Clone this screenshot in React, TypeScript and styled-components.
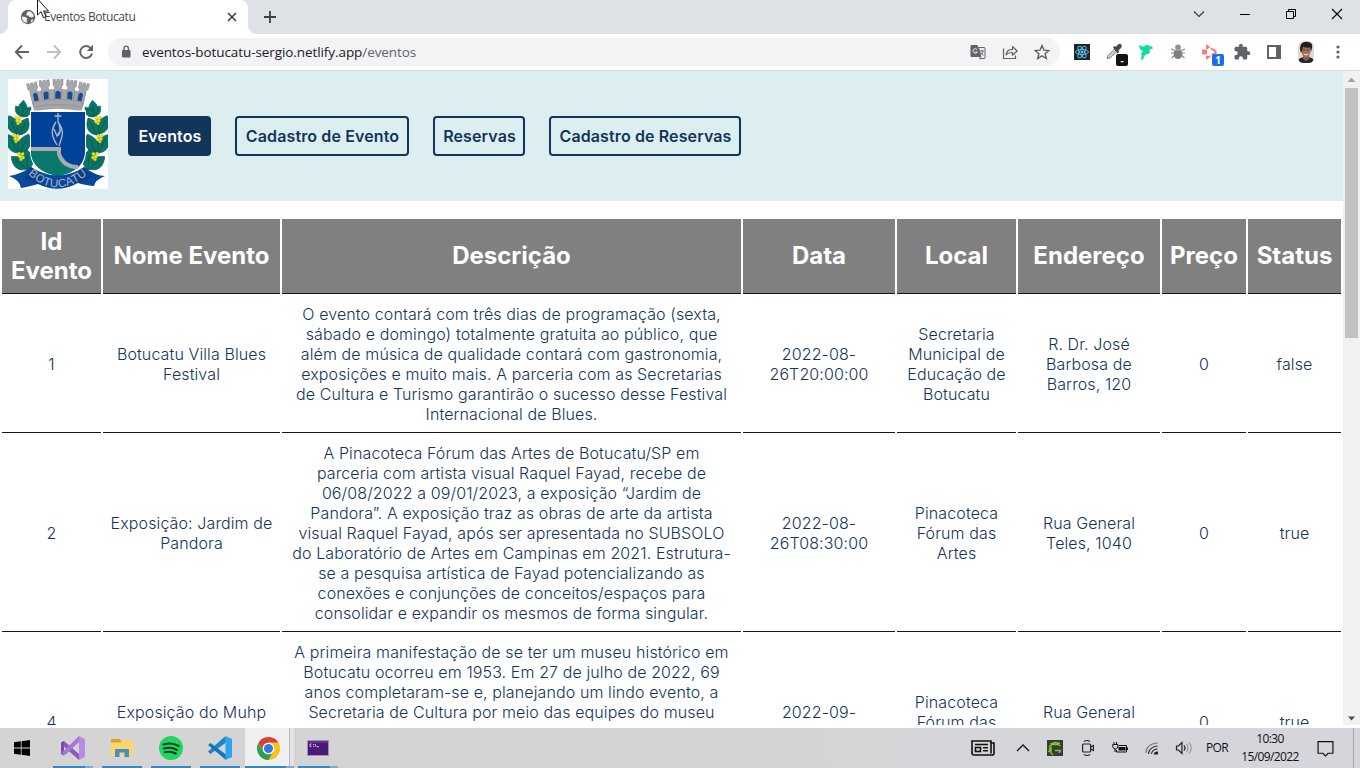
import React from "react";
import styled, { createGlobalStyle, css } from "styled-components";

const GlobalStyle = createGlobalStyle`
  * { box-sizing: border-box; }
  html, body { margin: 0; padding: 0; overflow: hidden; }
  body { background: #fff; font-family: Inter, "Liberation Sans", sans-serif; }
  svg { display: block; flex: none; }
`;

const chromeFont = `"Open Sans", "Noto Sans", sans-serif`;

const Screen = styled.div`
  position: relative;
  display: flex;
  flex-direction: column;
  width: 1360px;
  height: 768px;
  overflow: hidden;
  background: #fff;
`;

/* ---------- browser frame ---------- */

const TabStrip = styled.div`
  display: flex;
  height: 34px;
  padding-left: 8px;
  background: #dee1e6;
`;

const Tab = styled.div`
  position: relative;
  display: flex;
  align-items: center;
  width: 240px;
  padding: 0 8px 0 12px;
  background: #fff;
  border-radius: 8px 8px 0 0;
  &::before, &::after {
    content: "";
    position: absolute;
    bottom: 0;
    width: 8px;
    height: 8px;
  }
  &::before { left: -8px; background: radial-gradient(circle at 0 0, transparent 7.5px, #fff 8px); }
  &::after { right: -8px; background: radial-gradient(circle at 100% 0, transparent 7.5px, #fff 8px); }
`;

const TabTitle = styled.span`
  flex: 1;
  margin-left: 8px;
  font: 12px/16px ${chromeFont};
  letter-spacing: -0.4px;
  color: #45494d;
  white-space: nowrap;
`;

const NewTab = styled.div`
  display: flex;
  align-items: center;
  justify-content: center;
  width: 44px;
`;

const WindowButtons = styled.div`
  display: flex;
  margin-left: auto;
`;

const WindowButton = styled.div`
  display: flex;
  align-items: center;
  justify-content: center;
  width: 46px;
  height: 28px;
`;

const Toolbar = styled.div`
  display: flex;
  align-items: center;
  height: 37px;
  padding: 0 6px;
  border-bottom: 1px solid #d7dcde;
  background: #fff;
`;

const ToolButton = styled.div`
  position: relative;
  display: flex;
  align-items: center;
  justify-content: center;
  width: 32px;
  height: 28px;
`;

const Omnibox = styled.div`
  display: flex;
  align-items: center;
  width: 952px;
  height: 28px;
  margin: 0 6px;
  padding: 0 2px 0 12px;
  border-radius: 14px;
  background: #f1f3f4;
`;

const Url = styled.span`
  flex: 1;
  margin-left: 10px;
  font: 13.5px/18px ${chromeFont};
  color: #202124;
  letter-spacing: -0.08px;
  white-space: nowrap;
  span { color: #5f6368; }
`;

const ExtBadge = styled.span<{ $color: string }>`
  position: absolute;
  right: 2px;
  bottom: 0;
  width: 12px;
  height: 12px;
  border-radius: 2px;
  background: ${(p) => p.$color};
  color: #fff;
  font: 700 10px/12px ${chromeFont};
  text-align: center;
`;

/* ---------- page ---------- */

const Viewport = styled.div`
  display: flex;
  height: 654px;
  overflow: hidden;
`;

const Page = styled.main`
  width: 1343px;
  height: 654px;
  overflow: hidden;
`;

const Header = styled.header`
  display: flex;
  align-items: center;
  height: 130px;
  margin-bottom: 16px;
  padding: 0 8px;
  background: #dceef0;
`;

const CrestFrame = styled.div`
  width: 100px;
  height: 110px;
  margin: -4px 20px 0 0;
  background: #fff;
`;

const Nav = styled.nav`
  display: flex;
  gap: 24px;
`;

const NavLink = styled.a<{ $w: number; $active?: boolean }>`
  width: ${(p) => p.$w}px;
  height: 40px;
  padding-left: 1px;
  border: 2px solid #12355b;
  border-radius: 4px;
  color: #12355b;
  font-size: 16px;
  font-weight: 600;
  letter-spacing: 0.12px;
  line-height: 36px;
  text-align: center;
  white-space: nowrap;
  ${(p) => p.$active && css`background: #12355b; color: #fff;`}
`;

const Table = styled.table`
  width: 1343px;
  table-layout: fixed;
  border-collapse: separate;
  border-spacing: 2px;
`;

const Th = styled.th`
  height: 75px;
  padding: 7px 0;
  border-bottom: 1px solid #14142b;
  background: #808080;
  color: #fff;
  font-size: 24px;
  font-weight: 700;
  line-height: 29.1px;
`;

const Td = styled.td`
  padding: 8px 7px;
  border-bottom: 1px solid #14142b;
  color: #12355b;
  font-size: 16px;
  font-weight: 300;
  letter-spacing: 0.11px;
  line-height: 20px;
  text-align: center;
  white-space: pre-line;
`;

const Scrollbar = styled.div`
  display: flex;
  flex-direction: column;
  align-items: center;
  justify-content: space-between;
  width: 17px;
  height: 654px;
  background: #f1f1f1;
`;

const Thumb = styled.div`
  width: 13px;
  height: 250px;
  margin-bottom: auto;
  background: #c1c1c1;
`;

/* ---------- taskbar ---------- */

const Taskbar = styled.footer`
  display: flex;
  height: 40px;
  margin-top: 3px;
  background: linear-gradient(90deg, #d4d4d4, #d4d4d5 40%, #d5d6dc);
`;

const StartButton = styled.div`
  display: flex;
  align-items: center;
  width: 49px;
  padding-left: 14px;
`;

const AppButton = styled.div<{ $active?: boolean; $stacked?: boolean }>`
  position: relative;
  display: flex;
  align-items: center;
  justify-content: center;
  width: 49px;
  padding-right: 2px;
  background: ${(p) => (p.$active ? "linear-gradient(90deg, #efeff1 44px, #b9b9bb 44px 45px, #e3e3e5 45px)" : "none")};
  &::after {
    content: "";
    position: absolute;
    left: ${(p) => (p.$active ? 0 : 4)}px;
    right: ${(p) => (p.$active ? 0 : 5)}px;
    bottom: 0;
    height: 2px;
    background: ${(p) => (p.$stacked ? "linear-gradient(90deg, #3a87bf calc(100% - 8px), #82abc9 calc(100% - 8px))" : "#3a87bf")};
  }
`;

const Tray = styled.div`
  display: flex;
  margin-left: auto;
`;

const TrayItem = styled.div<{ $w: number }>`
  display: flex;
  align-items: center;
  justify-content: center;
  width: ${(p) => p.$w}px;
  color: #111;
  font: 12px/18px ${chromeFont};
  letter-spacing: -0.6px;
  text-align: center;
  white-space: nowrap;
`;

const ShowDesktop = styled.div`
  width: 7px;
  margin-left: 8px;
  border-left: 1px solid #a7a8ad;
`;

const Pointer = styled.svg`
  position: absolute;
  left: 37px;
  top: 0;
`;

/* ---------- drawings ---------- */

const Glyph = ({ d, size = 16, color = "#5f6368", w = 2, box = 16 }: { d: string; size?: number; color?: string; w?: number; box?: number }) => (
  <svg width={size} height={size} viewBox={`0 0 ${box} ${box}`} fill="none" stroke={color} strokeWidth={w}>
    <path d={d} />
  </svg>
);

const Leaf = ({ x, y, r, s = 1 }: { x: number; y: number; r: number; s?: number }) => (
  <g transform={`translate(${x} ${y}) rotate(${r}) scale(${s})`}>
    <path d="M0 0C-6-4-6-10 0-16C6-10 6-4 0 0Z" fill="#087567" stroke="#07504f" strokeWidth=".5" />
    <path d="M0 0V-12" stroke="#064c49" strokeWidth=".5" />
  </g>
);

const Berries = ({ x, y }: { x: number; y: number }) => (
  <g fill="#f0e51c" stroke="#b5a90c" strokeWidth=".3">
    <circle cx={x - 2} cy={y - 2.4} r="1.600" />
    <circle cx={x + 1.6} cy={y - 2} r="1.600" />
    <circle cx={x - 0.8} cy={y + 0.8} r="1.700" />
    <circle cx={x + 2} cy={y + 1.6} r="1.600" />
    <circle cx={x} cy={y + 3.6} r="1.400" />
  </g>
);

const Branch = () => (
  <g>
    <path d="M15 30C5 50 7 75 23 91" fill="none" stroke="#07504f" />
    <Leaf x={14} y={37} r={-32} s={0.75} />
    <Leaf x={14} y={38} r={5} s={1.05} />
    <Leaf x={15} y={38} r={38} s={0.8} />
    <Leaf x={9} y={55} r={-24} s={1.25} />
    <Leaf x={11} y={56} r={28} s={1.2} />
    <Leaf x={10} y={74} r={-28} s={1.3} />
    <Leaf x={12} y={74} r={25} s={1.3} />
    <Leaf x={19} y={90} r={-52} s={1.25} />
    <Leaf x={20} y={91} r={-4} s={1.3} />
    <Berries x={10} y={41} />
    <Berries x={8} y={59} />
    <Berries x={13} y={77} />
  </g>
);

const Tower = ({ x, y, r }: { x: number; y: number; r: number }) => (
  <path
    transform={`translate(${x} ${y}) rotate(${r})`}
    d="M-5 0h2.300v2h1.500V0h2.400v2h1.500V0H5v5.500L3.500 7.500V23h-7V7.500L-5 5.500Z"
    fill="#a5a6aa"
    stroke="#808187"
    strokeWidth=".5"
  />
);

const Crest = () => (
  <svg width="100" height="110" viewBox="0 0 100 110">
    <Branch />
    <g transform="translate(100 0) scale(-1 1)"><Branch /></g>
    <path d="M22 14Q50 6 78 14L74 30Q50 25 26 30Z" fill="#a5a6aa" />
    <Tower x={23.5} y={4} r={-13} />
    <Tower x={36} y={1.3} r={-6} />
    <Tower x={50} y={0.3} r={0} />
    <Tower x={64} y={1.3} r={6} />
    <Tower x={76.5} y={4} r={13} />
    <path d="M25 23.500Q50 17 75 23.500L73.500 32Q50 27 26.500 32Z" fill="#a5a6aa" stroke="#808187" strokeWidth=".4" />
    <path d="M27 28Q50 23 73 28" fill="none" stroke="#85868b" strokeWidth=".6" />
    <g fill="#164a91">
      <path d="M26.500 22.500l-1.500-7q2-3.500 4.500 0l1 6Z" />
      <path d="M36 20.800l-.5-6.800q2.500-3.500 5 0v6Z" />
      <path d="M47.300 19.800v-6.300q2.700-3.500 5.400 0v6.300Z" />
      <path d="M64 20.800l.5-6.800q-2.500-3.500-5 0v6Z" />
      <path d="M73.500 22.500l1.500-7q-2-3.500-4.500 0l-1 6Z" />
    </g>
    <path d="M22 31.500H78V72C78 88 66 96 50 99C34 96 22 88 22 72Z" fill="#fff" />
    <path d="M23 33H77V72C77 87 65 94 50 97C35 94 23 87 23 72Z" fill="#00429a" />
    <path d="M23 70H51V77C53 85 60 90 67 90C61 95 54 96 50 97C35 94 23 87 23 72Z" fill="#08796c" />
    <path d="M23 70H51V75C54 84 61 88 70 88" fill="none" stroke="#aaabad" strokeWidth="4" />
    <g fill="none" stroke="#a8b3c6" strokeWidth="1.400">
      <path d="M50 34v9M46.500 37h7" />
      <path d="M48 43C42 52 44 58 49 66M50 43C58 53 53 60 51 67M46 50L49 57L53 50M49 57Q54 55 51 45" />
    </g>
    <path d="M1 97Q11 96 23 88Q50 105 76 88Q88 97 97 97Q87 101 86 107Q76 106 70 104Q50 115 30 105Q19 108 13 109Q12 101 1 97Z" fill="#07489b" />
    <path d="M23 88Q29 94 32 95L30 105L16 99ZM76 88Q71 94 68 95L70 104L84 98Z" fill="#0a3f87" />
    <path id="motto-arc" d="M20 95Q49 122 81 94" fill="none" />
    <text fill="#a9b6c4" fontFamily="Liberation Sans, sans-serif" fontSize="11.500">
      <textPath href="#motto-arc" textLength="66">BOTUCATU</textPath>
    </text>
  </svg>
);

const Favicon = () => (
  <svg width="16" height="16" viewBox="0 0 16 16">
    <circle cx="8" cy="8" r="7.200" fill="#5f6368" />
    <path d="M2 7.500l3.500.5 2 1.700-1 1.300 1 2.500C4 14 1.500 11 2 7.500ZM8 2.200c3 0 5.300 2 5.900 5L12 8.500 9.500 8 8.500 6.400H6.300L6.700 4.300ZM11.500 10.500l2 0c-.6 1.500-1.500 2.400-3 3Z" fill="#f3f3f3" />
  </svg>
);

const Lock = () => (
  <svg width="12" height="14" viewBox="0 0 12 14">
    <rect x="2" y="5" width="8.500" height="7.500" rx="1" fill="#5f6368" />
    <path d="M4 5V3.300a2.200 2.200 0 014.400 0V5" fill="none" stroke="#5f6368" strokeWidth="1.400" />
  </svg>
);

const Translate = () => (
  <svg width="16" height="16" viewBox="0 0 16 16">
    <path d="M1.500 1h6l3.500 12H1.500a1 1 0 01-1-1V2a1 1 0 011-1Z" fill="#5f6368" />
    <path d="M8.500 3.500h5.700a.8.800 0 01.8.800v9.500a.8.800 0 01-.8.800H9.500l1.500-2Z" fill="#f1f3f4" stroke="#5f6368" />
    <path d="M7 5.500A2.200 2.200 0 107.300 8H5.300" fill="none" stroke="#f1f3f4" />
    <path d="M9.500 7h4.500M11.800 5.700V7M13 7.200q-.8 2.500-2.500 3.800M10.800 8.500l2.700 3" fill="none" stroke="#5f6368" strokeWidth=".9" />
  </svg>
);

const Share = () => (
  <svg width="18" height="16" viewBox="0 0 18 16" fill="none" stroke="#5f6368" strokeWidth="1.200">
    <path d="M2.500 4.500v10h12v-3" />
    <path d="M5 11c.5-4 3-5.500 6.500-5.600V2.500L16.200 7l-4.700 4.200V8.500C8.500 8.500 6.500 9 5 11Z" strokeLinejoin="round" />
  </svg>
);

const ReactTile = () => (
  <svg width="16" height="16" viewBox="0 0 16 16">
    <rect width="16" height="16" fill="#20232a" />
    <g fill="none" stroke="#55bfdf" strokeWidth="1">
      <ellipse cx="8" cy="8" rx="6.500" ry="2.500" />
      <ellipse cx="8" cy="8" rx="6.500" ry="2.500" transform="rotate(60 8 8)" />
      <ellipse cx="8" cy="8" rx="6.500" ry="2.500" transform="rotate(120 8 8)" />
    </g>
    <circle cx="8" cy="8" r="1.300" fill="#61dafb" />
  </svg>
);

const Dropper = () => (
  <svg width="18" height="18" viewBox="0 0 18 18">
    <path d="M2 15.500L3 12.500L9.500 6l2.500 2.500L5 15Z" fill="#c9c9c9" stroke="#858585" />
    <path d="M8 4.500l1.500-1.500 1.500.8L13 1.500q2.500-1.500 3.500.5t-1 3.500L13.500 7.500l.5 1.500-1.500 1.500Z" fill="#474747" />
  </svg>
);

const GreenBird = () => (
  <svg width="16" height="16" viewBox="0 0 16 16" fill="#10dca0">
    <path d="M1 1l4 1.800L8 1l3 .2.500 1.300 2.500-.3L15 4.500l-3.500 1 .5 3-2 1.500-2.500.5L6 13l-1 2.500-2 .2.800-4.700L2.500 10 5 7 2 5.500Z" />
  </svg>
);

const Bug = () => (
  <svg width="16" height="16" viewBox="0 0 16 16">
    <path d="M1 5l3 1.500M1 9h3M1.500 14l3-2.500M15 5l-3 1.500M15 9h-3M14.500 14l-3-2.500" stroke="#8b8b8b" strokeWidth="1.200" />
    <ellipse cx="8" cy="9.700" rx="4.400" ry="5.300" fill="#808080" />
    <circle cx="8" cy="3.200" r="2.800" fill="#929292" />
    <path d="M4 6h8" stroke="#bbb" strokeWidth=".8" />
  </svg>
);

const RedArrow = () => (
  <svg width="18" height="16" viewBox="0 0 18 16">
    <rect x="1" y="5.500" width="5" height="5" fill="#f77d7d" />
    <path d="M6 5V2l10 6-10 6v-3" fill="none" stroke="#f77d7d" strokeWidth="2" strokeDasharray="6 1.500" />
  </svg>
);

const Puzzle = () => (
  <svg width="18" height="18" viewBox="0 0 24 24" fill="#5f6368">
    <path d="M20.500 11H19V7a2 2 0 00-2-2h-4V3.500a2.500 2.500 0 00-5 0V5H4a2 2 0 00-2 2v3.800h1.500a2.700 2.700 0 010 5.400H2V20a2 2 0 002 2h3.800v-1.500a2.700 2.700 0 015.400 0V22H17a2 2 0 002-2v-4h1.500a2.500 2.500 0 000-5Z" />
  </svg>
);

const SidePanel = () => (
  <svg width="14" height="14" viewBox="0 0 14 14">
    <path d="M0 0h14v14H0ZM2 2v10h7V2Z" fill="#5f6368" fillRule="evenodd" />
  </svg>
);

const Avatar = () => (
  <svg width="18" height="22" viewBox="0 0 18 22">
    <rect x="1" width="16" height="22" rx="6" fill="#dcdad2" />
    <path d="M1.500 19q1-3 7.500-3t7.500 3q-1.500 3-4.500 3H6q-3 0-4.500-3Z" fill="#26252a" />
    <path d="M6.500 13h5.500l.5 5-3.500 2L6 18Z" fill="#8a5b45" />
    <ellipse cx="9" cy="10" rx="4.500" ry="6.500" fill="#a06e55" />
    <path d="M3.500 11Q1.500 1 9 .8q7.500 0 6 6.200l-1 4-1-4.500q-4 .5-7-.8L4.500 11.500Z" fill="#241d1b" />
    <path d="M6 8.800h2.200M9.800 8.800H12" stroke="#5a3a2d" />
    <path d="M6.800 13q2.200 1.800 4.400 0" stroke="#eee" fill="none" />
  </svg>
);

const StartLogo = () => (
  <svg width="16" height="16" viewBox="0 0 16 16">
    <path d="M0 2.300L6.800 1.300V7.500H0ZM7.600 1.200L16 0V7.500H7.600ZM0 8.400H6.800V14.700L0 13.700ZM7.600 8.400H16V16L7.600 14.800Z" />
  </svg>
);

const VisualStudio = () => (
  <svg width="24" height="24" viewBox="0 0 24 24">
    <path d="M0 6.500l3-1.500 15 13V24L1 9Z" fill="#8b5bc0" />
    <path d="M0 6.500V18l3 1.500V5Z" fill="#7950a8" />
    <path d="M3 19.500l3-2L18 6V0L1 16.500Z" fill="#a878d8" />
    <path d="M18 0l6 3v18l-6 3Z" fill="#b98be7" />
    <path d="M18 7v10l-6-5Z" fill="#d4d4d4" />
  </svg>
);

const Folder = () => (
  <svg width="24" height="24" viewBox="0 0 24 24">
    <path d="M1 3h9l1 2h11v15H1Z" fill="#e0a02c" />
    <path d="M1 6.500h10l1.500-2H23V20H1Z" fill="#ffd66b" />
    <path d="M5 21v-8h14v8h-4.500v-4.500h-5V21Z" fill="#3f92c9" />
  </svg>
);

const Spotify = () => (
  <svg width="24" height="24" viewBox="0 0 24 24">
    <circle cx="12" cy="12" r="12" fill="#1ed760" />
    <path d="M4.500 8.500q8-2.500 15.200 1.500M5 12.500q7-2 13 1.500M5.800 16.300q6-1.500 11 1.200" fill="none" stroke="#123c20" strokeWidth="2.100" strokeLinecap="round" />
  </svg>
);

const VsCode = () => (
  <svg width="24" height="24" viewBox="0 0 24 24">
    <path d="M17.500 0L18 6.500 2.500 18 0 15.500Z" fill="#1e86c8" />
    <path d="M0 9l2.500-2L18 18.500V24Z" fill="#1377b8" />
    <path d="M17.500 0L24 3v18l-6.500 3Z" fill="#2ba5ec" />
  </svg>
);

const ChromeLogo = () => (
  <svg width="23" height="23" viewBox="0 0 24 24">
    <path d="M1.600 6A12 12 0 0122.400 6H12a6 6 0 00-5.200 9Z" fill="#df4032" />
    <path d="M22.400 6A12 12 0 0112 24l5.200-9A6 6 0 0012 6Z" fill="#fbc116" />
    <path d="M1.600 6l5.200 9A6 6 0 0017.200 15L12 24A12 12 0 011.600 6Z" fill="#2da14e" />
    <circle cx="12" cy="12" r="6" fill="#fff" />
    <circle cx="12" cy="12" r="4.700" fill="#3477dd" />
  </svg>
);

const Terminal = () => (
  <svg width="22" height="16" viewBox="0 0 22 16">
    <rect x=".5" y=".5" width="21" height="15" rx=".8" fill="#4b1a78" stroke="#a58bb8" />
    <path d="M1 1h20v2H1Z" fill="#5f3287" />
    <path d="M4.500 4H3v2.500h1.500M6 4.500h1M6 6.500h1M8 4l1 3M10 6.800h2" stroke="#eee" strokeWidth=".8" fill="none" />
  </svg>
);

const News = () => (
  <svg width="24" height="16" viewBox="0 0 24 16" fill="none" stroke="#111" strokeWidth="1.600">
    <path d="M20 3h3v10.500q0 1.500-2 1.500H3q-2 0-2-2V1h19v12.500" />
    <path d="M4 4.500h13M12 7.800h5M12 10.800h5" />
    <rect x="4.500" y="7.500" width="5" height="4" />
  </svg>
);

const GreenTile = () => (
  <svg width="16" height="16" viewBox="0 0 16 16">
    <rect width="16" height="16" fill="#3a3b3a" />
    <path d="M3.500 4l5-1.500 4.500 1M2 7l3-2.500h6L13.500 6M2 9.500L4.500 7M1.500 12l2.500-3v4l2 2M8 10.500h5.500L12 13" fill="none" stroke="#7bd021" strokeWidth="1.400" />
  </svg>
);

const Camera = () => (
  <svg width="14" height="18" viewBox="0 0 14 18" fill="none" stroke="#222" strokeWidth="1.200">
    <rect x="1.600" y="5" width="8" height="8" rx="1" />
    <path d="M9.600 8l2.800-1.500v5L9.600 10M3 2.500q3-2 6 0M3 15.500q3 2 6 0" />
  </svg>
);

const Battery = () => (
  <svg width="17" height="12" viewBox="0 0 17 12">
    <path d="M6.500 5h7v3.500h-7Z" fill="#111" />
    <path d="M6.500 3.500h8v6.500h-10V8M15.500 5.500v2.500M2 0v3M4.500 0v3M3 7V10" fill="none" stroke="#111" />
    <path d="M.8 2.500h5V5Q5 7 3.300 7T.8 5Z" fill="none" stroke="#111" />
  </svg>
);

const Wifi = () => (
  <svg width="14" height="14" viewBox="0 0 14 14" fill="none" stroke="#222" strokeWidth="1.100">
    <path d="M1 12Q1 3 12.500 2" stroke="#777" />
    <path d="M3.500 13Q4 6 12.500 5M6.500 13Q7 8.500 12.500 8" />
    <path d="M9.500 13Q9.500 11 12.500 11V13Z" fill="#222" />
  </svg>
);

const Sound = () => (
  <svg width="18" height="14" viewBox="0 0 18 14" fill="none" stroke="#222" strokeWidth="1.200">
    <path d="M1.500 5h2l3.500-3.500v11L3.500 9h-2Z" />
    <path d="M9 4.500q2 2.500 0 5" />
    <path d="M11.500 3q3 4 0 8M14 1.500q4.500 5.500 0 11" stroke="#999" />
  </svg>
);

/* ---------- data ---------- */

const columns: [string, number][] = [
  ["Id Evento", 99], ["Nome Evento", 177], ["Descrição", 459], ["Data", 152],
  ["Local", 119], ["Endereço", 142], ["Preço", 84], ["Status", 93],
];

const events: string[][] = [
  ["1", "Botucatu Villa Blues\nFestival",
    "O evento contará com três dias de programação (sexta,\nsábado e domingo) totalmente gratuita ao público, que\nalém de música de qualidade contará com gastronomia,\nexposições e muito mais. A parceria com as Secretarias\nde Cultura e Turismo garantirão o sucesso desse Festival\nInternacional de Blues.",
    "2022-08-26T20:00:00", "Secretaria Municipal de Educação de Botucatu", "R. Dr. José Barbosa de Barros, 120", "0", "false"],
  ["2", "Exposição: Jardim de\nPandora",
    "A Pinacoteca Fórum das Artes de Botucatu/SP em\nparceria com artista visual Raquel Fayad, recebe de\n06/08/2022 a 09/01/2023, a exposição “Jardim de\nPandora”. A exposição traz as obras de arte da artista\nvisual Raquel Fayad, após ser apresentada no SUBSOLO\ndo Laboratório de Artes em Campinas em 2021. Estrutura-\nse a pesquisa artística de Fayad potencializando as\nconexões e conjunções de conceitos/espaços para\nconsolidar e expandir os mesmos de forma singular.",
    "2022-08-26T08:30:00", "Pinacoteca Fórum das Artes", "Rua General Teles, 1040", "0", "true"],
  ["4", "Exposição do Muhp\n\u00a0",
    "A primeira manifestação de se ter um museu histórico em\nBotucatu ocorreu em 1953. Em 27 de julho de 2022, 69\nanos completaram-se e, planejando um lindo evento, a\nSecretaria de Cultura por meio das equipes do museu\n\u00a0\n\u00a0\n\u00a0\n\u00a0",
    "2022-09-\n\u00a0", "Pinacoteca Fórum das Artes", "Rua General Teles, 1040", "0", "true"],
];

export default function App() {
  return (
    <Screen>
      <GlobalStyle />
      <TabStrip>
        <Tab>
          <Favicon />
          <TabTitle>Eventos Botucatu</TabTitle>
          <Glyph d="M4 4l8 8M12 4l-8 8" color="#3c4043" w={1.6} />
        </Tab>
        <NewTab><Glyph d="M8 2v12M2 8h12" color="#3c4043" w={1.8} /></NewTab>
        <WindowButtons>
          <WindowButton><Glyph d="M3 5.500l5 5 5-5" color="#333" w={1.1} /></WindowButton>
          <WindowButton><Glyph d="M3 8.500h10" color="#000" w={1} /></WindowButton>
          <WindowButton><Glyph d="M3.500 5.500h7v7h-7ZM5.500 5.500v-2h7v7h-2" color="#000" w={1} /></WindowButton>
          <WindowButton><Glyph d="M3 3l10 10M13 3L3 13" color="#000" w={1.1} /></WindowButton>
        </WindowButtons>
      </TabStrip>
      <Toolbar>
        <ToolButton><Glyph d="M15 8H2M8 1.500L1.700 8 8 14.500" w={1.8} /></ToolButton>
        <ToolButton><Glyph d="M1 8H14M8 1.500L14.300 8 8 14.500" w={1.8} color="#bdbfc1" /></ToolButton>
        <ToolButton>
          <svg width="16" height="16" viewBox="0 0 16 16">
            <path d="M12.800 4.200A6 6 0 1014 9.500" fill="none" stroke="#5f6368" strokeWidth="1.900" />
            <path d="M15 .8V7H8.800Z" fill="#5f6368" />
          </svg>
        </ToolButton>
        <Omnibox>
          <Lock />
          <Url>eventos-botucatu-sergio.netlify.app<span>/eventos</span></Url>
          <ToolButton><Translate /></ToolButton>
          <ToolButton><Share /></ToolButton>
          <ToolButton><Glyph d="M8 1.500l1.900 4.600 5 .4-3.800 3.200 1.200 4.800L8 11.900l-4.300 2.600 1.200-4.800L1.100 6.500l5-.4Z" w={1.4} /></ToolButton>
        </Omnibox>
        <ToolButton><ReactTile /></ToolButton>
        <ToolButton><Dropper /><ExtBadge $color="#111214">-</ExtBadge></ToolButton>
        <ToolButton><GreenBird /></ToolButton>
        <ToolButton><Bug /></ToolButton>
        <ToolButton><RedArrow /><ExtBadge $color="#1a6fe8">1</ExtBadge></ToolButton>
        <ToolButton><Puzzle /></ToolButton>
        <ToolButton><SidePanel /></ToolButton>
        <ToolButton><Avatar /></ToolButton>
        <ToolButton>
          <svg width="4" height="16" viewBox="0 0 4 16" fill="#5f6368"><circle cx="2" cy="3" r="1.600" /><circle cx="2" cy="8" r="1.600" /><circle cx="2" cy="13" r="1.600" /></svg>
        </ToolButton>
      </Toolbar>
      <Viewport>
        <Page>
          <Header>
            <CrestFrame><Crest /></CrestFrame>
            <Nav>
              <NavLink $w={83} $active>Eventos</NavLink>
              <NavLink $w={174}>Cadastro de Evento</NavLink>
              <NavLink $w={92}>Reservas</NavLink>
              <NavLink $w={192}>Cadastro de Reservas</NavLink>
            </Nav>
          </Header>
          <Table>
            <colgroup>{columns.map(([name, w]) => <col key={name} width={w} />)}</colgroup>
            <thead><tr>{columns.map(([name]) => <Th key={name}>{name}</Th>)}</tr></thead>
            <tbody>
              {events.map((row) => (
                <tr key={row[0]}>{row.map((cell, i) => <Td key={i}>{cell}</Td>)}</tr>
              ))}
            </tbody>
          </Table>
        </Page>
        <Scrollbar>
          <svg width="17" height="17" viewBox="0 0 17 17"><path d="M4.500 11L8.500 6.500l4 4.500Z" fill="#a3a3a3" /></svg>
          <Thumb />
          <svg width="17" height="17" viewBox="0 0 17 17"><path d="M5 8.500h7L8.500 12.500Z" fill="#505050" /></svg>
        </Scrollbar>
      </Viewport>
      <Taskbar>
        <StartButton><StartLogo /></StartButton>
        <AppButton $stacked><VisualStudio /></AppButton>
        <AppButton><Folder /></AppButton>
        <AppButton><Spotify /></AppButton>
        <AppButton><VsCode /></AppButton>
        <AppButton $active $stacked><ChromeLogo /></AppButton>
        <AppButton $stacked><Terminal /></AppButton>
        <Tray>
          <TrayItem $w={48}><News /></TrayItem>
          <TrayItem $w={32}><Glyph d="M2 11l6-6 6 6" color="#111" w={1.3} /></TrayItem>
          <TrayItem $w={32}><GreenTile /></TrayItem>
          <TrayItem $w={34}><Camera /></TrayItem>
          <TrayItem $w={30}><Battery /></TrayItem>
          <TrayItem $w={34}><Wifi /></TrayItem>
          <TrayItem $w={30}><Sound /></TrayItem>
          <TrayItem $w={36}>POR</TrayItem>
          <TrayItem $w={70}>10:30<br />15/09/2022</TrayItem>
          <TrayItem $w={40}><Glyph d="M1 1.500h14v11h-4.500L8 15l-2.500-2.500H1Z" color="#111" w={1.1} size={17} /></TrayItem>
          <ShowDesktop />
        </Tray>
      </Taskbar>
      <Pointer width="14" height="20" viewBox="0 0 14 20">
        <path d="M.5-1V15L4 11.700 6.500 17.700 9 16.600 6.600 11H11.500Z" fill="#fff" stroke="#111" />
      </Pointer>
    </Screen>
  );
}
